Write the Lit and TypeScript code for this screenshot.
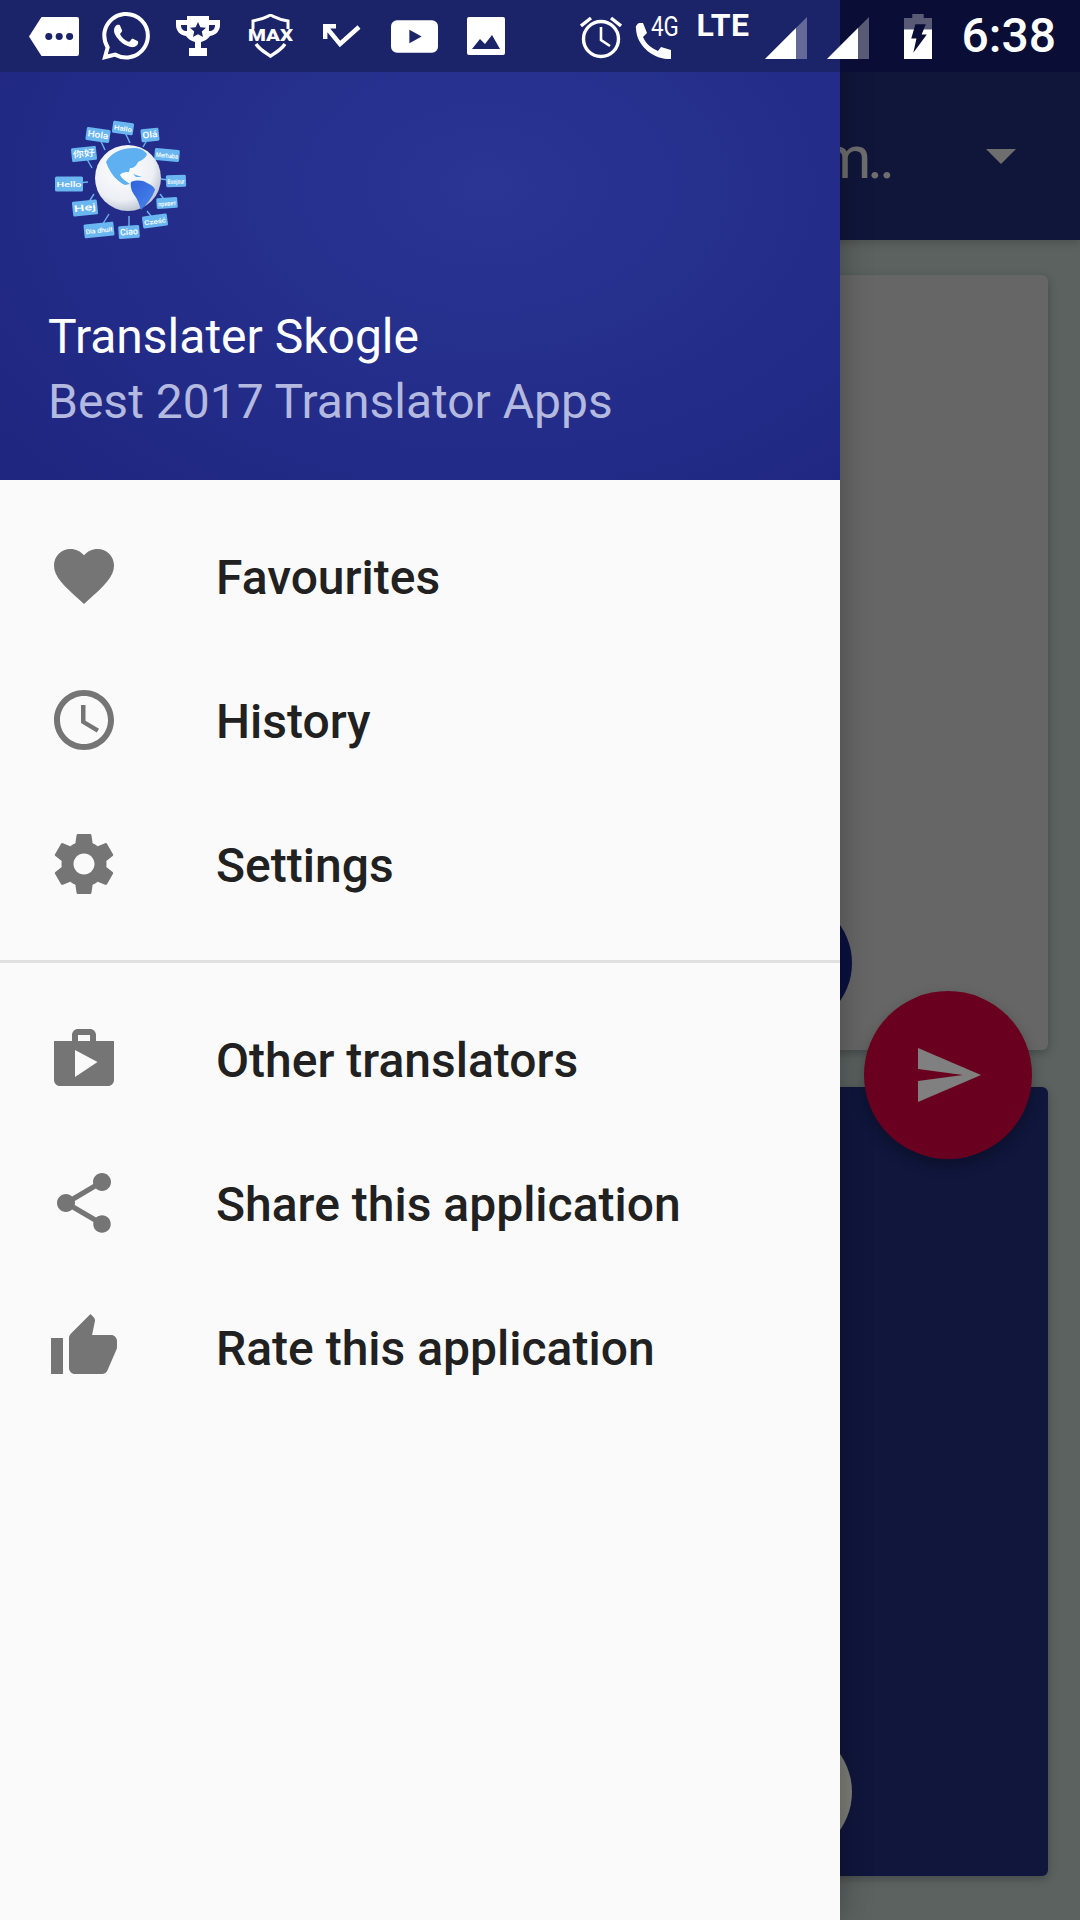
import { LitElement, css, html, svg } from 'lit';
import { customElement } from 'lit/decorators.js';

const BAR_LEFT = '#1b2369';

// material icon paths, 24 box, drawn at 72px in the drawer
const ICONS = {
  heart:
    'M12 21.35l-1.45-1.32C5.4 15.36 2 12.28 2 8.5 2 5.42 4.42 3 7.5 3c1.74 0 3.41.81 4.5 2.09C13.09 3.81 14.76 3 16.5 3 19.58 3 22 5.42 22 8.5c0 3.78-3.4 6.86-8.55 11.54L12 21.35z',
  clock:
    'M11.99 2C6.47 2 2 6.48 2 12s4.47 10 9.99 10C17.52 22 22 17.52 22 12S17.52 2 11.99 2zM12 20c-4.42 0-8-3.58-8-8s3.58-8 8-8 8 3.58 8 8-3.58 8-8 8zm.5-13H11v6l5.25 3.15.75-1.23-4.5-2.67z',
  gear:
    'M19.43 12.98c.04-.32.07-.64.07-.98s-.03-.66-.07-.98l2.11-1.65c.19-.15.24-.42.12-.64l-2-3.46c-.12-.22-.39-.3-.61-.22l-2.49 1c-.52-.4-1.08-.73-1.69-.98l-.38-2.65C14.46 2.18 14.25 2 14 2h-4c-.25 0-.46.18-.49.42l-.38 2.65c-.61.25-1.17.59-1.69.98l-2.49-1c-.23-.09-.49 0-.61.22l-2 3.46c-.13.22-.07.49.12.64l2.11 1.65c-.04.32-.07.65-.07.98s.03.66.07.98l-2.11 1.65c-.19.15-.24.42-.12.64l2 3.46c.12.22.39.3.61.22l2.49-1c.52.4 1.08.73 1.69.98l.38 2.65c.03.24.24.42.49.42h4c.25 0 .46-.18.49-.42l.38-2.65c.61-.25 1.17-.59 1.69-.98l2.49 1c.23.09.49 0 .61-.22l2-3.46c.12-.22.07-.49-.12-.64l-2.11-1.65zM12 15.5c-1.93 0-3.5-1.57-3.5-3.5s1.57-3.5 3.5-3.5 3.5 1.57 3.5 3.5-1.57 3.5-3.5 3.5z',
  shop:
    'M16 6V4c0-1.11-.89-2-2-2h-4c-1.11 0-2 .89-2 2v2H2v13c0 1.11.89 2 2 2h16c1.11 0 2-.89 2-2V6h-6zm-6-2h4v2h-4V4zM9 18V9l7.5 4L9 18z',
  share:
    'M18 16.08c-.76 0-1.44.3-1.96.77L8.91 12.7c.05-.23.09-.46.09-.7s-.04-.47-.09-.7l7.05-4.11c.54.5 1.25.81 2.04.81 1.66 0 3-1.34 3-3s-1.34-3-3-3-3 1.34-3 3c0 .24.04.47.09.7L8.04 9.81C7.5 9.31 6.79 9 6 9c-1.66 0-3 1.34-3 3s1.34 3 3 3c.79 0 1.5-.31 2.04-.81l7.12 4.16c-.05.21-.08.43-.08.65 0 1.61 1.31 2.92 2.92 2.92 1.61 0 2.92-1.31 2.92-2.92s-1.31-2.92-2.92-2.92z',
  thumb:
    'M1 21h4V9H1v12zm22-11c0-1.1-.9-2-2-2h-6.31l.95-4.57.03-.32c0-.41-.17-.79-.44-1.06L14.17 1 7.59 7.59C7.22 7.95 7 8.45 7 9v10c0 1.1.9 2 2 2h9c.83 0 1.54-.5 1.84-1.22l3.02-7.05c.09-.23.14-.47.14-.73v-1.91l-.01-.01L23 10z',
};

const TOP_MENU = [
  { icon: ICONS.heart, label: 'Favourites' },
  { icon: ICONS.clock, label: 'History' },
  { icon: ICONS.gear, label: 'Settings' },
];
const BOTTOM_MENU = [
  { icon: ICONS.shop, label: 'Other translators' },
  { icon: ICONS.share, label: 'Share this application' },
  { icon: ICONS.thumb, label: 'Rate this application' },
];

// speech bubbles round the globe: centre, size, tilt, word, stem end
const BUBBLES = [
  { x: 68, y: 35, w: 24, h: 13, r: 8, t: 'Hola', sx: 75, sy: 50 },
  { x: 93, y: 28, w: 21, h: 12, r: 8, t: 'Hallo', sx: 100, sy: 43 },
  { x: 120, y: 35, w: 18, h: 13, r: -6, t: 'Olá', sx: 113, sy: 47 },
  { x: 54, y: 54, w: 25, h: 14, r: -6, t: '你好', sx: 62, sy: 68 },
  { x: 137, y: 55, w: 25, h: 12, r: 5, t: 'Merhaba', sx: 126, sy: 50 },
  { x: 39, y: 84, w: 28, h: 15, r: 0, t: 'Hello', sx: 58, sy: 82 },
  { x: 146, y: 81, w: 20, h: 12, r: -2, t: 'Bonjour', sx: 131, sy: 79 },
  { x: 55, y: 108, w: 25, h: 15, r: -6, t: 'Hej', sx: 64, sy: 94 },
  { x: 137, y: 103, w: 21, h: 11, r: -4, t: 'привет', sx: 130, sy: 94 },
  { x: 125, y: 121, w: 25, h: 12, r: -8, t: 'Cześć', sx: 117, sy: 111 },
  { x: 69, y: 130, w: 30, h: 14, r: -6, t: 'Dia dhuit', sx: 79, sy: 114 },
  { x: 99, y: 132, w: 21, h: 13, r: -4, t: 'Ciao', sx: 99, sy: 116 },
];

@customElement('app-root')
export class AppRoot extends LitElement {
  private renderLogo() {
    return html`
      <svg class="logo" viewBox="0 0 180 160" width="180" height="160">
        <defs>
          <radialGradient id="globe" cx="0.4" cy="0.35" r="0.75">
            <stop offset="0" stop-color="#ffffff" />
            <stop offset="0.65" stop-color="#eceff4" />
            <stop offset="1" stop-color="#aab3c6" />
          </radialGradient>
          <linearGradient id="south" x1="0" y1="0" x2="1" y2="1">
            <stop offset="0" stop-color="#2f62dc" />
            <stop offset="1" stop-color="#4a86ea" />
          </linearGradient>
        </defs>
        ${BUBBLES.map(
          (b) => svg`
            <line x1=${b.x} y1=${b.y} x2=${b.sx} y2=${b.sy} stroke="#6cb4ee" stroke-width="1.4" />
            <g transform="translate(${b.x} ${b.y}) rotate(${b.r})">
              <rect x=${-b.w / 2} y=${-b.h / 2} width=${b.w} height=${b.h} rx="1.5" fill="#6ab6f0" />
              <text
                y="2.8"
                text-anchor="middle"
                fill="#ffffff"
                font-family="Roboto, 'Noto Sans CJK SC', sans-serif"
                font-size=${b.t.length > 4 ? 6.5 : 9}
                font-weight="500"
                textLength=${b.w - 3}
                lengthAdjust="spacingAndGlyphs"
              >${b.t}</text>
            </g>
          `,
        )}
        <circle cx="98" cy="78" r="33" fill="url(#globe)" />
        <path
          d="M76 62C80 54 90 48 104 48C110 48 114 50 117 54C116 58 112 60 108 62C106 66 104 68 100 68L99 72C96 72 92 72 90 75C92 79 96 81 100 84L95 85C88 82 80 74 76 62Z"
          fill="#5fb0f0"
        />
        <path d="M103 74L112 77L106 77Z" fill="#5fb0f0" />
        <path
          d="M101 82C107 80 112 80 117 83C122 85 125 88 125 90C122 98 117 104 111 110C109 104 108 100 105 96C102 92 100 87 101 82Z"
          fill="url(#south)"
        />
      </svg>
    `;
  }

  private renderMenu(items: { icon: string; label: string }[]) {
    return html`
      <ul class="menu">
        ${items.map(
          (item) => html`
            <li class="row">
              <svg class="row-icon" viewBox="0 0 24 24"><path d=${item.icon} /></svg>
              <span class="row-label">${item.label}</span>
            </li>
          `,
        )}
      </ul>
    `;
  }

  private renderStatusBar() {
    return html`
      <div class="status">
        <div class="notifs">
          <div class="cell">
            <svg width="50" height="39" viewBox="0 0 48 38" preserveAspectRatio="none">
              <path d="M12 0H46a2 2 0 0 1 2 2V36a2 2 0 0 1-2 2H12L0 19Z" fill="#fff" />
              <circle cx="19" cy="19" r="3.4" fill=${BAR_LEFT} />
              <circle cx="29" cy="19" r="3.4" fill=${BAR_LEFT} />
              <circle cx="39" cy="19" r="3.4" fill=${BAR_LEFT} />
            </svg>
          </div>
          <div class="cell">
            <svg width="48" height="48" viewBox="0 0 24 24">
              <path
                fill="#fff"
                d="M17.472 14.382c-.297-.149-1.758-.867-2.03-.967-.273-.099-.471-.148-.67.15-.197.297-.767.966-.94 1.164-.173.199-.347.223-.644.075-.297-.15-1.255-.463-2.39-1.475-.883-.788-1.48-1.761-1.653-2.059-.173-.297-.018-.458.13-.606.134-.133.298-.347.446-.52.149-.174.198-.298.298-.497.099-.198.05-.371-.025-.52-.075-.149-.669-1.612-.916-2.207-.242-.579-.487-.5-.669-.51-.173-.008-.371-.01-.57-.01-.198 0-.52.074-.792.372-.272.297-1.04 1.016-1.04 2.479 0 1.462 1.065 2.875 1.213 3.074.149.198 2.096 3.2 5.077 4.487.709.306 1.262.489 1.694.625.712.227 1.36.195 1.871.118.571-.085 1.758-.719 2.006-1.413.248-.694.248-1.289.173-1.413-.074-.124-.272-.198-.57-.347m-5.421 7.403h-.004a9.87 9.87 0 01-5.031-1.378l-.361-.214-3.741.982.998-3.648-.235-.374a9.86 9.86 0 01-1.51-5.26c.001-5.45 4.436-9.884 9.888-9.884 2.64 0 5.122 1.03 6.988 2.898a9.825 9.825 0 012.893 6.994c-.003 5.45-4.437 9.884-9.885 9.884m8.413-18.297A11.815 11.815 0 0012.05 0C5.495 0 .16 5.335.157 11.892c0 2.096.547 4.142 1.588 5.945L.057 24l6.305-1.654a11.882 11.882 0 005.683 1.448h.005c6.554 0 11.89-5.335 11.893-11.893a11.821 11.821 0 00-3.48-8.413Z"
              />
            </svg>
          </div>
          <div class="cell">
            <svg width="46" height="40" viewBox="0 0 46 40">
              <path d="M12 0H34V4H45V9C45 15 41 19 35 20C33 23 30 25 26 26V32H32V40H14V32H20V26C16 25 13 23 11 20C5 19 1 15 1 9V4H12Z" fill="#fff" />
              <path d="M6 9H12V15C8 15 6 13 6 9ZM40 9H34V15C38 15 40 13 40 9Z" fill=${BAR_LEFT} />
              <path d="M23 6L25.4 11.2L31 11.8L26.8 15.5L28 21L23 18.2L18 21L19.2 15.5L15 11.8L20.6 11.2Z" fill=${BAR_LEFT} />
            </svg>
          </div>
          <div class="cell">
            <svg width="45" height="44" viewBox="0 0 45 44">
              <path d="M5 15V7C16 5 18 3 22.5 1C27 3 29 5 40 7V15" fill="none" stroke="#fff" stroke-width="3" />
              <path d="M8 30C12 36 18 39 22.5 42C27 39 33 36 37 30" fill="none" stroke="#fff" stroke-width="3.4" />
              <text x="22.5" y="27" text-anchor="middle" fill="#fff" font-family="Roboto, sans-serif" font-size="17" font-weight="900" textLength="45" lengthAdjust="spacingAndGlyphs">MAX</text>
            </svg>
          </div>
          <div class="cell">
            <svg width="38" height="24" viewBox="0 0 38 24">
              <path d="M2.2 15V2.2H13M3 3L17 20L36 3" fill="none" stroke="#fff" stroke-width="4.4" />
            </svg>
          </div>
          <div class="cell">
            <svg width="47" height="33" viewBox="0 0 46 32">
              <rect width="46" height="32" rx="6" fill="#fff" />
              <path d="M18 9.5L30 16L18 22.5Z" fill=${BAR_LEFT} />
            </svg>
          </div>
          <div class="cell">
            <svg width="38" height="38" viewBox="0 0 38 38">
              <rect width="38" height="38" rx="2" fill="#fff" />
              <path d="M5 32L13 22L18 27L25 18L33 32Z" fill=${BAR_LEFT} />
            </svg>
          </div>
        </div>
        <div class="system">
          <svg class="alarm" width="42" height="44" viewBox="0 0 42 44">
            <circle cx="21" cy="24" r="17.5" fill="none" stroke="#fff" stroke-width="3.4" />
            <path d="M21 12V25L30 31" fill="none" stroke="#fff" stroke-width="2.6" />
            <path d="M1 11L11 3M41 11L31 3" fill="none" stroke="#fff" stroke-width="3.4" />
          </svg>
          <div class="phone">
            <svg width="36" height="36" viewBox="0 0 36 36">
              <path d="M1 5C0 4 2 1 4 0L8 0L12 10L8 14C11 21 16 25 23 28L26 24L36 27V36C18 37 1 22 1 5Z" fill="#fff" />
            </svg>
            <span class="four-g">4G</span>
          </div>
          <span class="lte">LTE</span>
          <svg class="sig-one" width="42" height="42" viewBox="0 0 42 42">
            <path d="M0 42L42 0V42Z" fill="#fff" fill-opacity="0.32" />
            <path d="M0 42L31 11V42Z" fill="#fff" />
          </svg>
          <svg class="sig-two" width="42" height="42" viewBox="0 0 42 42">
            <path d="M0 42L42 0V42Z" fill="#fff" fill-opacity="0.32" />
            <path d="M0 42L31 11V42Z" fill="#fff" />
          </svg>
          <svg class="battery" width="28" height="45" viewBox="0 0 27 44" preserveAspectRatio="none">
            <path d="M8 0H19V4H27V15H0V4H8Z" fill="#fff" fill-opacity="0.32" />
            <path d="M0 15H27V44H0Z" fill="#fff" />
            <path d="M11 10H21L17 20H22L9 38L12 24H7Z" fill="#0a0d35" />
          </svg>
          <span class="clock">6:38</span>
        </div>
      </div>
    `;
  }

  render() {
    return html`
      <div class="screen">
        <div class="under">
          <div class="appbar">
            <span class="appbar-title">m..</span>
            <span class="caret"></span>
          </div>
          <div class="content">
            <div class="card light">
              <span class="round dark"></span>
            </div>
            <div class="card navy">
              <span class="round grey"></span>
            </div>
          </div>
        </div>
        <button class="fab" aria-label="Translate">
          <svg viewBox="0 0 24 24" width="72" height="72">
            <path d="M2 21L23 12L2 3V10L17 12L2 14Z" fill="#808080" />
          </svg>
        </button>
        <aside class="drawer">
          <header class="drawer-head">
            ${this.renderLogo()}
            <div class="app-name">Translater Skogle</div>
            <div class="app-sub">Best 2017 Translator Apps</div>
          </header>
          ${this.renderMenu(TOP_MENU)}
          <hr class="divider" />
          ${this.renderMenu(BOTTOM_MENU)}
        </aside>
        ${this.renderStatusBar()}
      </div>
    `;
  }

  static styles = css`
    :host {
      display: block;
      font-family: Roboto, 'Noto Sans', sans-serif;
    }

    .screen {
      position: relative;
      width: 1080px;
      height: 1920px;
      overflow: hidden;
      background: #5b6260;
    }

    .under {
      display: flex;
      flex-direction: column;
      padding-top: 72px;
    }

    .appbar {
      height: 168px;
      background: #10163a;
      display: flex;
      align-items: center;
      justify-content: flex-end;
      box-shadow: 0 4px 8px rgba(0, 0, 0, 0.15);
    }
    .appbar-title {
      font-size: 60px;
      line-height: 60px;
      letter-spacing: -4px;
      color: #6e6e6e;
      margin-right: 95px;
      margin-top: 4px;
    }
    .caret {
      width: 0;
      height: 0;
      border-left: 15px solid transparent;
      border-right: 15px solid transparent;
      border-top: 15px solid #6e6e6e;
      margin-right: 64px;
      margin-top: 0;
    }

    .content {
      display: flex;
      flex-direction: column;
      gap: 37px;
      padding: 35px 32px 0 30px;
    }
    .card {
      position: relative;
      border-radius: 6px;
      box-shadow: 0 3px 10px rgba(0, 0, 0, 0.25);
    }
    .card.light {
      height: 775px;
      background: #666666;
    }
    .card.navy {
      height: 789px;
      background: #10163c;
    }
    .round {
      position: absolute;
      left: 690px;
      width: 132px;
      height: 132px;
      border-radius: 50%;
    }
    .round.dark {
      top: 622px;
      background: #0b1040;
    }
    .round.grey {
      top: 639px;
      background: #7d7d78;
    }

    .fab {
      position: absolute;
      left: 864px;
      top: 991px;
      width: 168px;
      height: 168px;
      padding: 0;
      border: 0;
      border-radius: 50%;
      background: #6a0020;
      display: flex;
      align-items: center;
      justify-content: center;
      box-shadow: 0 6px 14px rgba(0, 0, 0, 0.28);
    }

    .drawer {
      position: absolute;
      left: 0;
      top: 0;
      bottom: 0;
      width: 840px;
      background: #fafafa;
      display: flex;
      flex-direction: column;
      box-shadow: 0 0 30px rgba(0, 0, 0, 0.3);
    }
    .drawer-head {
      height: 408px;
      margin-top: 72px;
      box-sizing: border-box;
      padding: 28px 0 0 48px;
      display: flex;
      flex-direction: column;
      align-items: flex-start;
      background: radial-gradient(
          ellipse 620px 420px at 58% 28%,
          #2a3594 0%,
          rgba(42, 53, 148, 0) 100%
        ),
        #1e2680;
    }
    .logo {
      display: block;
      margin: 0 0 0 -18px;
    }
    .app-name {
      font-size: 48px;
      line-height: 60px;
      color: #ffffff;
      margin-top: 47px;
    }
    .app-sub {
      font-size: 48px;
      line-height: 60px;
      margin-top: 5px;
      color: #b4b9e0;
    }

    .menu {
      list-style: none;
      margin: 0;
      padding: 24px 0;
    }
    .row {
      height: 144px;
      display: flex;
      align-items: center;
      gap: 96px;
      padding-left: 48px;
      font-size: 48px;
      font-weight: 500;
      color: #212121;
    }
    .row-label {
      padding-top: 2px;
    }
    .row-icon {
      width: 72px;
      height: 72px;
      fill: #757575;
      flex: none;
    }
    .divider {
      margin: 0;
      height: 3px;
      border: 0;
      background: #e0e0e0;
    }

    .status {
      position: absolute;
      left: 0;
      top: 0;
      width: 1080px;
      height: 72px;
      display: flex;
      align-items: center;
      justify-content: space-between;
      color: #fff;
      background: linear-gradient(90deg, #1b2369 0 840px, #0a0d35 840px);
    }
    .notifs {
      display: flex;
      padding-left: 18px;
    }
    .cell {
      width: 72px;
      height: 72px;
      display: flex;
      align-items: center;
      justify-content: center;
    }
    .system {
      display: flex;
      align-items: center;
      height: 72px;
      padding-right: 24px;
    }
    .alarm {
      margin-top: 1px;
    }
    .phone {
      position: relative;
      width: 44px;
      height: 72px;
      margin-left: 13px;
    }
    .phone svg {
      position: absolute;
      left: 0;
      top: 23px;
    }
    .four-g {
      position: absolute;
      left: 16px;
      top: 12px;
      font-size: 28px;
      line-height: 30px;
      transform: scaleX(0.8);
      transform-origin: left center;
    }
    .lte {
      font-size: 32px;
      line-height: 32px;
      font-weight: 700;
      margin: -22px 0 0 17px;
      letter-spacing: 0.5px;
    }
    .sig-one {
      margin: 4px 0 0 15px;
    }
    .sig-two {
      margin: 4px 0 0 20px;
    }
    .battery {
      margin: 0 0 0 35px;
    }
    .clock {
      font-size: 48px;
      line-height: 72px;
      font-weight: 500;
      margin-left: 30px;
    }
  `;
}
